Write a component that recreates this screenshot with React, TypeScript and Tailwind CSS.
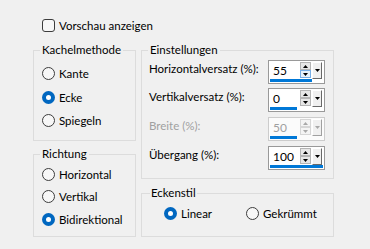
import React from "react";

type SpinProps = {
  value: string;
  bar: string;
  disabled?: boolean;
  hover?: boolean;
};

function Tri({ up, color }: { up?: boolean; color: string }) {
  return (
    <svg width="5" height="3" viewBox="0 0 5 3" className="block">
      {up ? <path d="M2.5 0 L5 3 L0 3 Z" fill={color} /> : <path d="M0 0 L5 0 L2.5 3 Z" fill={color} />}
    </svg>
  );
}

function Spin({ value, bar, disabled, hover }: SpinProps) {
  const tri = disabled ? "#a8a8a8" : "#000000";
  return (
    <div
      className={
        "w-[57px] h-[24px] border flex flex-col " +
        (disabled ? "border-[#cccccc] bg-[#fbfbfb]" : "border-[#999999] bg-white")
      }
    >
      <div className="flex h-[17px] mt-[1px]">
        <div
          className={
            "flex-1 pl-[4px] leading-[17px] text-[12px] " + (disabled ? "text-[#a0a0a0]" : "text-black")
          }
        >
          {value}
        </div>
        <div className="flex flex-col w-[11px] h-[16px]">
          <div
            className={
              "h-[8px] border flex items-center justify-center " +
              (disabled ? "border-[#d6d6d6] bg-[#f4f4f4]" : "border-[#b4b4b4] bg-[#e6e6e6]")
            }
          >
            <Tri up color={tri} />
          </div>
          <div
            className={
              "h-[8px] border flex items-center justify-center " +
              (hover
                ? "border-[#78aee5] bg-[#e5f1fb]"
                : disabled
                ? "border-[#d6d6d6] bg-[#f4f4f4]"
                : "border-[#b4b4b4] bg-[#e6e6e6]")
            }
          >
            <Tri color={tri} />
          </div>
        </div>
        <div
          className={
            "ml-[1px] mr-[2px] w-[10px] h-[17px] bg-[#f0f0f0] border-l border-t border-white border-r border-b flex items-center justify-center " +
            (disabled ? "border-r-[#a0a0a0] border-b-[#a0a0a0]" : "border-r-[#696969] border-b-[#696969]")
          }
        >
          <Tri color={tri} />
        </div>
      </div>
      <div className="h-[3px] ml-[1px]">
        <div className={"h-[3px] bg-[#0078d7] " + bar} />
      </div>
    </div>
  );
}

function Radio({ label, checked }: { label: string; checked?: boolean }) {
  return (
    <div className="flex items-center h-[13px] gap-[4px]">
      {checked ? (
        <div className="w-[13px] h-[13px] rounded-full bg-[#0067c0] flex items-center justify-center">
          <div className="w-[5px] h-[5px] rounded-full bg-white" />
        </div>
      ) : (
        <div className="w-[13px] h-[13px] rounded-full border border-[#3c3c3c] bg-[#f7f7f7]" />
      )}
      <span className="whitespace-nowrap">{label}</span>
    </div>
  );
}

export default function App() {
  return (
    <div className="w-[370px] h-[249px] bg-[#f0f0f0] text-[11.5px] leading-[16px] text-black font-['Lato',sans-serif] overflow-hidden">
      <div className="pl-[42px] pt-[19px] flex items-center h-[32px] gap-[4px]">
        <div className="w-[13px] h-[13px] rounded-[3px] border border-[#3c3c3c] bg-[#f7f7f7]" />
        <span>Vorschau anzeigen</span>
      </div>

      <div className="flex gap-[5px] pl-[33px] mt-[10px]">
        {/* left column */}
        <div className="flex flex-col gap-[5px] w-[103px]">
          <fieldset className="border border-[#dcdcdc] h-[99px]">
            <legend className="ml-[6px] px-[2px] leading-[16px]">Kachelmethode</legend>
            <div className="flex flex-col pl-[8px]">
              <div className="mt-[9px]">
                <Radio label="Kante" />
              </div>
              <div className="mt-[11px]">
                <Radio label="Ecke" checked />
              </div>
              <div className="mt-[10px]">
                <Radio label="Spiegeln" />
              </div>
            </div>
          </fieldset>
          <fieldset className="border border-[#dcdcdc] h-[91px]">
            <legend className="ml-[6px] px-[2px] leading-[16px]">Richtung</legend>
            <div className="flex flex-col pl-[8px]">
              <div className="mt-[6px]">
                <Radio label="Horizontal" />
              </div>
              <div className="mt-[9px]">
                <Radio label="Vertikal" />
              </div>
              <div className="mt-[10px]">
                <Radio label="Bidirektional" checked />
              </div>
            </div>
          </fieldset>
        </div>

        {/* right column */}
        <div className="flex flex-col gap-[6px] w-[193px]">
          <fieldset className="border border-[#dcdcdc] h-[137px]">
            <legend className="ml-[6px] px-[2px] leading-[16px]">Einstellungen</legend>
            <div className="flex flex-col pl-[7px]">
              <div className="flex items-start mt-[2px]">
                <div className="w-[119px] mt-[1px] whitespace-nowrap">Horizontalversatz (%):</div>
                <Spin value="55" bar="w-[42px]" hover />
              </div>
              <div className="flex items-start mt-[4px]">
                <div className="w-[119px] mt-[1px] whitespace-nowrap">Vertikalversatz (%):</div>
                <Spin value="0" bar="w-[27px]" />
              </div>
              <div className="flex items-start mt-[5px]">
                <div className="w-[119px] mt-[1px] whitespace-nowrap text-[#a0a0a0]">Breite (%):</div>
                <Spin value="50" bar="w-[27px]" disabled />
              </div>
              <div className="flex items-start mt-[5px]">
                <div className="w-[119px] mt-[1px] whitespace-nowrap">Übergang (%):</div>
                <Spin value="100" bar="w-[53px]" />
              </div>
            </div>
          </fieldset>
          <fieldset className="border border-[#dcdcdc] h-[52px]">
            <legend className="ml-[8px] px-[1px] leading-[16px]">Eckenstil</legend>
            <div className="flex pl-[22px] mt-[6px]">
              <div className="w-[82px]">
                <Radio label="Linear" checked />
              </div>
              <Radio label="Gekrümmt" />
            </div>
          </fieldset>
        </div>
      </div>
    </div>
  );
}
